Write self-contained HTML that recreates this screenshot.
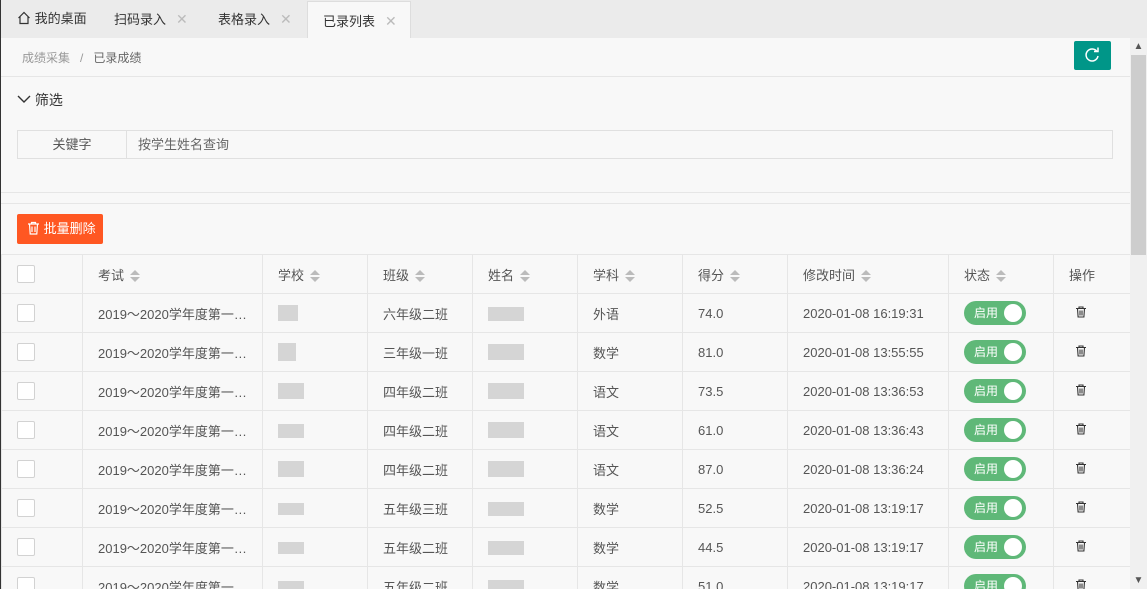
<!DOCTYPE html>
<html><head><meta charset="utf-8"><style>
*{margin:0;padding:0;box-sizing:border-box}
html,body{width:1147px;height:589px;overflow:hidden}
body{background:#f8f8f8;font-family:"Liberation Sans","Noto Sans CJK SC",sans-serif;font-size:13px;color:#555;position:relative}
.tabs{position:absolute;left:0;top:0;width:1147px;height:38px;background:#ebebeb;border-left:1px solid #333}
.tab{position:absolute;top:0;height:38px;line-height:38px;color:#333;font-size:13px}
.tab .x{color:#bbb;margin-left:10px;font-size:14px}
.tab.act{background:#f8f8f8;top:1px;height:37px;border:1px solid #ddd;border-bottom:none}
.main{position:absolute;left:0;top:38px;width:1130px;height:551px;border-left:1px solid #333}
.bc{position:absolute;left:21px;top:11px;font-size:12px;color:#999}
.bc b{font-weight:normal;color:#666}
.refresh{position:absolute;left:1073px;top:3px;width:37px;height:29px;background:#009688;border-radius:2px}
.sec{position:absolute;left:1px;width:1129px;border-top:1px solid #e6e6e6;border-bottom:1px solid #e6e6e6;background:#f8f8f8}
table{position:absolute;left:1px;top:254px;border-collapse:collapse;table-layout:fixed}
td{height:39px;border:1px solid #e6e6e6;padding-left:15px;white-space:nowrap;overflow:hidden;color:#555}
.cb{display:inline-block;width:18px;height:18px;border:1px solid #d2d2d2;background:#fff;border-radius:2px;vertical-align:middle}
.sort{display:inline-block;vertical-align:middle;margin-left:6px;width:10px;height:12px;position:relative}
.sort:before{content:"";position:absolute;left:0;top:0;border:5px solid transparent;border-top:none;border-bottom:5px solid #bbb}
.sort:after{content:"";position:absolute;left:0;top:7px;border:5px solid transparent;border-bottom:none;border-top:5px solid #bbb}
.sw{display:inline-block;width:62px;height:24px;border-radius:12px;background:#5fb878;color:#fff;font-size:12px;line-height:24px;padding-left:10px;position:relative;vertical-align:middle}
.sw:after{content:"";position:absolute;right:4px;top:3px;width:18px;height:18px;border-radius:50%;background:#fff}
.blur{display:inline-block;background:#ccc;vertical-align:middle;opacity:.8}
.sb{position:absolute;left:1130px;top:38px;width:17px;height:551px;background:#f0f0f0}
.tr{padding-left:21px}
</style></head><body>
<div class="tabs">
 <div class="tab" style="left:16px"><svg width="14" height="14" viewBox="0 0 14 14" style="vertical-align:-2px"><path d="M1.5 7 7 1.5 12.5 7M3 5.5V12.5H11V5.5" fill="none" stroke="#333" stroke-width="1.2"/></svg> 我的桌面</div>
 <div class="tab" style="left:113px">扫码录入<span class="x">✕</span></div>
 <div class="tab" style="left:217px">表格录入<span class="x">✕</span></div>
 <div class="tab act" style="left:306px;width:104px;padding-left:15px">已录列表<span class="x">✕</span></div>
</div>
<div class="main">
 <div class="bc">成绩采集 &nbsp;&nbsp;/&nbsp;&nbsp; <b>已录成绩</b></div>
 <div class="refresh"><svg width="37" height="29" viewBox="0 0 37 29"><path d="M23 10.5A6 6 0 1 0 24 15" fill="none" stroke="#fff" stroke-width="1.5"/><path d="M20 10.5h4v-4" fill="none" stroke="#fff" stroke-width="1.5"/></svg></div>
</div>
<div class="sec" style="top:76px;height:45px"><div style="position:absolute;left:16px;top:13px;font-size:14px;color:#333"><svg width="14" height="10" viewBox="0 0 14 10" style="vertical-align:1px"><path d="M1 2 7 8 13 2" fill="none" stroke="#333" stroke-width="1.4"/></svg> 筛选</div></div>
<div class="sec" style="top:120px;height:73px;border-top:none">
 <div style="position:absolute;left:16px;top:10px;width:1096px;height:29px;border:1px solid #e0e0e0;background:#f8f8f8">
  <div style="position:absolute;left:0;top:0;width:109px;height:27px;border-right:1px solid #e0e0e0;text-align:center;line-height:27px">关键字</div>
  <div style="position:absolute;left:120px;top:0;line-height:27px;color:#666">按学生姓名查询</div>
 </div>
</div>
<div class="sec" style="top:203px;height:400px;border-bottom:none">
 <div style="position:absolute;left:16px;top:10px;width:86px;height:30px;background:#ff5722;border-radius:2px;color:#fff;line-height:30px;padding-left:10px;font-size:13px">
 <svg width="13" height="14" viewBox="0 0 13 14" style="vertical-align:-2px"><path d="M1 3h11M4.5 3V1.5h4V3M2.5 3l.7 10h6.6l.7-10M5 5.5v5.5M8 5.5v5.5" fill="none" stroke="#fff" stroke-width="1.2"/></svg> 批量删除</div>
</div>
<svg width="0" height="0" style="position:absolute"><symbol id="t" viewBox="0 0 12 12"><path d="M1 2.5h10M4 2.5V1h4v1.5M2.5 2.5l.6 8.5h5.8l.6-8.5M5 4.5v5M7 4.5v5" fill="none" stroke="#333" stroke-width="1.1"/></symbol></svg>
<table>
<colgroup><col style="width:81px"><col style="width:180px"><col style="width:105px"><col style="width:105px"><col style="width:105px"><col style="width:105px"><col style="width:105px"><col style="width:161px"><col style="width:105px"><col style="width:77px"></colgroup>
<tr><td><span class="cb"></span></td><td>考试<span class="sort"></span></td><td>学校<span class="sort"></span></td><td>班级<span class="sort"></span></td><td>姓名<span class="sort"></span></td><td>学科<span class="sort"></span></td><td>得分<span class="sort"></span></td><td>修改时间<span class="sort"></span></td><td>状态<span class="sort"></span></td><td>操作</td></tr>
<tr><td><span class="cb"></span></td><td>2019～2020学年度第一…</td><td><span class="blur" style="width:20px;height:16px"></span></td><td>六年级二班</td><td><span class="blur" style="width:36px;height:14px"></span></td><td>外语</td><td>74.0</td><td>2020-01-08 16:19:31</td><td><span class="sw">启用</span></td><td class="tr"><svg width="12" height="12"><use href="#t"/></svg></td></tr>
<tr><td><span class="cb"></span></td><td>2019～2020学年度第一…</td><td><span class="blur" style="width:18px;height:18px"></span></td><td>三年级一班</td><td><span class="blur" style="width:36px;height:16px"></span></td><td>数学</td><td>81.0</td><td>2020-01-08 13:55:55</td><td><span class="sw">启用</span></td><td class="tr"><svg width="12" height="12"><use href="#t"/></svg></td></tr>
<tr><td><span class="cb"></span></td><td>2019～2020学年度第一…</td><td><span class="blur" style="width:26px;height:16px"></span></td><td>四年级二班</td><td><span class="blur" style="width:36px;height:16px"></span></td><td>语文</td><td>73.5</td><td>2020-01-08 13:36:53</td><td><span class="sw">启用</span></td><td class="tr"><svg width="12" height="12"><use href="#t"/></svg></td></tr>
<tr><td><span class="cb"></span></td><td>2019～2020学年度第一…</td><td><span class="blur" style="width:26px;height:14px"></span></td><td>四年级二班</td><td><span class="blur" style="width:36px;height:16px"></span></td><td>语文</td><td>61.0</td><td>2020-01-08 13:36:43</td><td><span class="sw">启用</span></td><td class="tr"><svg width="12" height="12"><use href="#t"/></svg></td></tr>
<tr><td><span class="cb"></span></td><td>2019～2020学年度第一…</td><td><span class="blur" style="width:26px;height:16px"></span></td><td>四年级二班</td><td><span class="blur" style="width:36px;height:16px"></span></td><td>语文</td><td>87.0</td><td>2020-01-08 13:36:24</td><td><span class="sw">启用</span></td><td class="tr"><svg width="12" height="12"><use href="#t"/></svg></td></tr>
<tr><td><span class="cb"></span></td><td>2019～2020学年度第一…</td><td><span class="blur" style="width:26px;height:12px"></span></td><td>五年级三班</td><td><span class="blur" style="width:36px;height:14px"></span></td><td>数学</td><td>52.5</td><td>2020-01-08 13:19:17</td><td><span class="sw">启用</span></td><td class="tr"><svg width="12" height="12"><use href="#t"/></svg></td></tr>
<tr><td><span class="cb"></span></td><td>2019～2020学年度第一…</td><td><span class="blur" style="width:26px;height:12px"></span></td><td>五年级二班</td><td><span class="blur" style="width:36px;height:14px"></span></td><td>数学</td><td>44.5</td><td>2020-01-08 13:19:17</td><td><span class="sw">启用</span></td><td class="tr"><svg width="12" height="12"><use href="#t"/></svg></td></tr>
<tr><td><span class="cb"></span></td><td>2019～2020学年度第一…</td><td><span class="blur" style="width:26px;height:12px"></span></td><td>五年级二班</td><td><span class="blur" style="width:36px;height:14px"></span></td><td>数学</td><td>51.0</td><td>2020-01-08 13:19:17</td><td><span class="sw">启用</span></td><td class="tr"><svg width="12" height="12"><use href="#t"/></svg></td></tr>
</table>
<div class="sb"><div style="position:absolute;top:0;left:0;width:17px;height:17px;text-align:center;font-size:10px;line-height:17px;color:#555">▲</div><div style="position:absolute;top:17px;left:1px;width:15px;height:200px;background:#cdcdcd"></div><div style="position:absolute;bottom:0;left:0;width:17px;height:17px;text-align:center;font-size:10px;line-height:17px;color:#555">▼</div></div>
</body></html>
